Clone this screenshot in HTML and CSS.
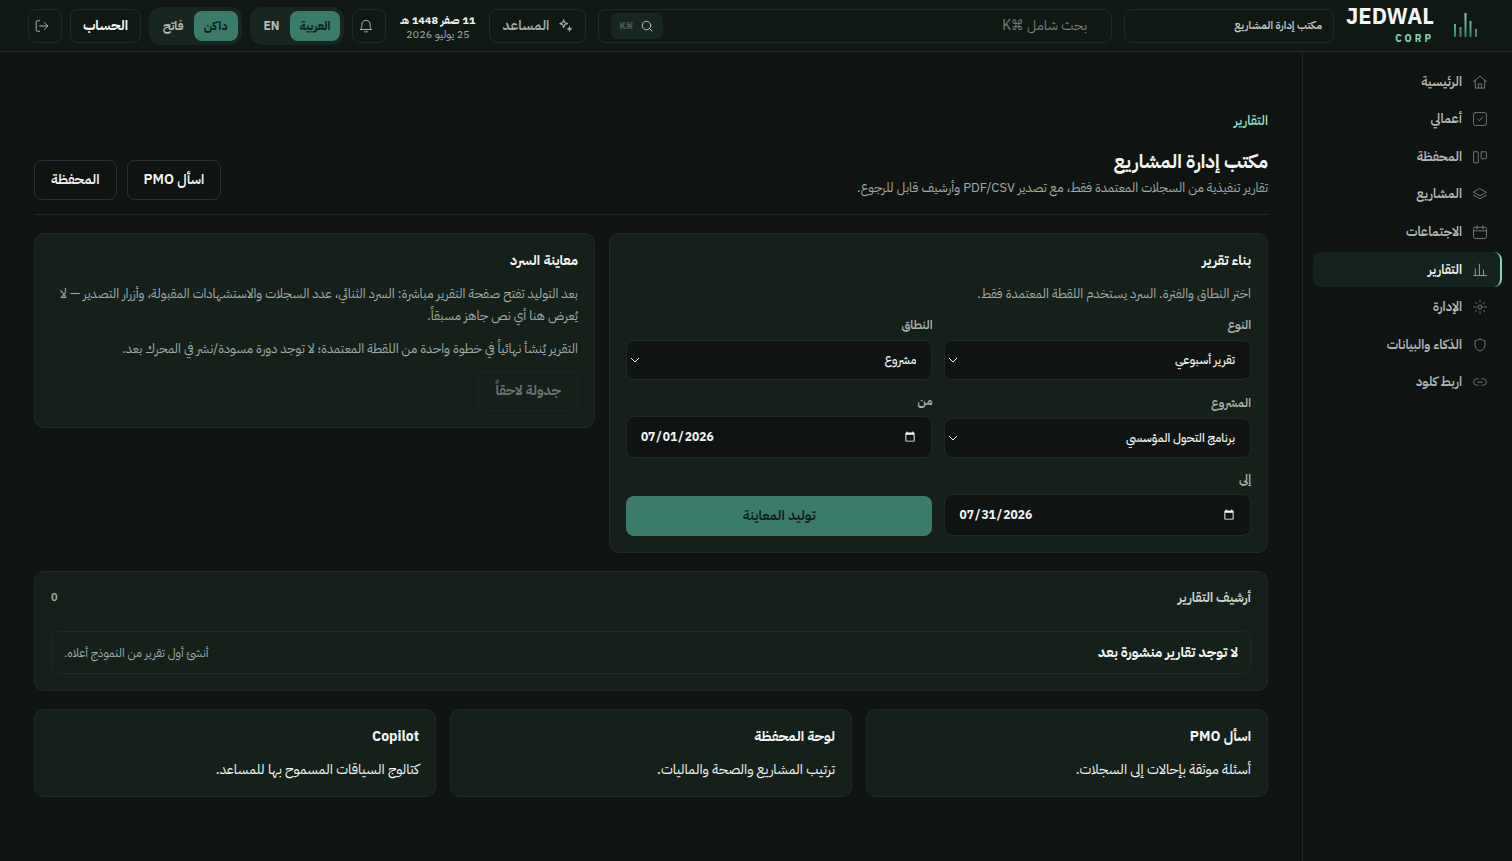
FILE: index.html
```html
<!DOCTYPE html>
<html lang="ar" dir="rtl">
<head>
<meta charset="utf-8">
<meta name="viewport" content="width=device-width, initial-scale=1">
<title>التقارير</title>
<link rel="stylesheet" href="styles.css">
</head>
<body>
<header class="topbar">
  <a class="brand" href="#">
    <svg class="brand-mark" viewBox="0 0 24 26" aria-hidden="true">
      <defs><linearGradient id="bars" gradientUnits="userSpaceOnUse" x1="0" y1="0" x2="0" y2="26"><stop offset="0" stop-color="#7fd6b6"/><stop offset="1" stop-color="#35735f"/></linearGradient></defs>
      <g fill="url(#bars)"><rect x="1" y="11" width="2" height="13"/><rect x="6.500" y="14" width="2" height="10"/><rect x="11.500" y="0" width="2" height="24"/><rect x="16.500" y="8" width="2" height="16"/><rect x="22" y="16" width="2" height="8"/></g>
    </svg>
    <span class="brand-text" dir="ltr"><strong>JEDWAL</strong><small>CORP</small></span>
  </a>
  <button class="box workspace" type="button">مكتب إدارة المشاريع</button>
  <form class="box search" role="search">
    <input class="search-input" type="search" aria-label="بحث شامل" placeholder="بحث شامل ⌘K">
    <button class="search-key" type="button" aria-label="بحث">
      <svg class="icon-s" viewBox="0 0 24 24"><circle cx="11" cy="11" r="8.500"/><path d="m22 22-5-5"/></svg>
      <kbd>⌘K</kbd>
    </button>
  </form>
  <button class="box assistant" type="button">
    <svg class="icon" viewBox="0 0 24 24"><path d="M8 1.500l1.800 4.700L14.500 8 9.800 9.800 8 14.500 6.200 9.800 1.500 8l4.700-1.800z" stroke-width="2"/><path d="M18 11.500l1.600 3.900 3.900 1.600-3.900 1.600L18 22.500l-1.600-3.900-3.900-1.600 3.900-1.600z" fill="currentColor" stroke="none"/></svg>
    <span>المساعد</span>
  </button>
  <div class="dates"><strong>11 صفر 1448 هـ</strong><span>25 يوليو 2026</span></div>
  <div class="tools">
    <button class="box square" type="button" aria-label="الإشعارات">
      <svg class="icon" viewBox="0 0 24 24"><path d="M2.500 18h19c-2-2-2.500-4.500-2.500-8.500a7 7 0 0 0-14 0c0 4-.5 6.500-2.500 8.500z"/><path d="M9.500 22h5"/></svg>
    </button>
    <div class="segment" role="group" aria-label="اللغة"><button class="on" type="button">العربية</button><button type="button">EN</button></div>
    <div class="segment" role="group" aria-label="المظهر"><button class="on" type="button">داكن</button><button type="button">فاتح</button></div>
    <button class="box account" type="button">الحساب</button>
    <button class="box square" type="button" aria-label="تسجيل الخروج">
      <svg class="icon" viewBox="0 0 24 24"><path d="M8 3H4a2 2 0 0 0-2 2v14a2 2 0 0 0 2 2h4M8 12h14M16 6l6 6-6 6"/></svg>
    </button>
  </div>
</header>
<div class="shell">
  <aside class="sidebar">
    <nav class="nav" aria-label="القائمة">
      <a href="#"><svg class="icon" viewBox="0 0 24 24"><path d="M1 11 12 2l11 9M4 9v13.500h16V9M9.500 22v-7h5v7"/></svg>الرئيسية</a>
      <a href="#"><svg class="icon" viewBox="0 0 24 24"><rect x="1" y="1" width="22" height="22" rx="3"/><path d="m8 12 3 3 5-6"/></svg>أعمالي</a>
      <a href="#"><svg class="icon" viewBox="0 0 24 24"><rect x="1" y="3" width="8" height="19" rx="1"/><rect x="14" y="3" width="9" height="12" rx="1"/></svg>المحفظة</a>
      <a href="#"><svg class="icon" viewBox="0 0 24 24"><path d="m12 3 11 6-11 6L1 9z"/><path d="m1 14 11 6 11-6"/></svg>المشاريع</a>
      <a href="#"><svg class="icon" viewBox="0 0 24 24"><rect x="1" y="4" width="22" height="19" rx="2"/><path d="M1 10h22M7 1v6M17 1v6"/></svg>الاجتماعات</a>
      <a class="active" href="#" aria-current="page"><svg class="icon" viewBox="0 0 24 24"><path d="M1 21.500h22M4 21V10M11 21V2M18 21v-9"/></svg>التقارير</a>
      <a href="#"><svg class="icon" viewBox="0 0 24 24"><circle cx="12" cy="12" r="3.500"/><path d="M12 1v3M12 20v3M1 12h4M19 12h4M4.200 4.200 6.500 6.500M17.500 17.500l2.300 2.300M4.200 19.800l2.300-2.300M17.500 6.500l2.300-2.300"/></svg>الإدارة</a>
      <a href="#"><svg class="icon" viewBox="0 0 24 24"><path d="M12 1.500c3 2 5.500 2.800 8.500 3V12c0 5-3.500 8.500-8.500 10.500C7 20.500 3.500 17 3.500 12V4.500c3-.2 5.500-1 8.500-3z"/></svg>الذكاء والبيانات</a>
      <a href="#"><svg class="icon" viewBox="0 0 24 24"><path d="M9 17.500H6.500a5.500 5.500 0 0 1 0-11H9M15 6.500h2.500a5.500 5.500 0 0 1 0 11H15M8 12h8"/></svg>اربط كلود</a>
    </nav>
  </aside>
  <main class="main">
    <p class="eyebrow">التقارير</p>
    <div class="page-head">
      <div class="page-title">
        <h1>مكتب إدارة المشاريع</h1>
        <p>تقارير تنفيذية من السجلات المعتمدة فقط، مع تصدير PDF/CSV وأرشيف قابل للرجوع.</p>
      </div>
      <div class="actions"><a class="btn" href="#">اسأل PMO</a><a class="btn" href="#">المحفظة</a></div>
    </div>
    <div class="split">
      <section class="card">
        <h2>بناء تقرير</h2>
        <p class="note">اختر النطاق والفترة. السرد يستخدم اللقطة المعتمدة فقط.</p>
        <form class="fields">
          <div class="field"><label for="kind">النوع</label><div class="pick"><select id="kind"><option>تقرير أسبوعي</option></select><svg viewBox="0 0 10 6"><path d="m1 1 4 4 4-4"/></svg></div></div>
          <div class="field"><label for="scope">النطاق</label><div class="pick"><select id="scope"><option>مشروع</option></select><svg viewBox="0 0 10 6"><path d="m1 1 4 4 4-4"/></svg></div></div>
          <div class="field"><label for="project">المشروع</label><div class="pick"><select id="project"><option>برنامج التحول المؤسسي</option></select><svg viewBox="0 0 10 6"><path d="m1 1 4 4 4-4"/></svg></div></div>
          <div class="field"><label for="from">من</label><input id="from" type="date" dir="ltr" value="2026-07-01"></div>
          <div class="field"><label for="to">إلى</label><input id="to" type="date" dir="ltr" value="2026-07-31"></div>
          <button class="primary" type="button">توليد المعاينة</button>
        </form>
      </section>
      <section class="card">
        <h2>معاينة السرد</h2>
        <p class="note">بعد التوليد تفتح صفحة التقرير مباشرة: السرد الثنائي، عدد السجلات والاستشهادات المقبولة، وأزرار التصدير — لا يُعرض هنا أي نص جاهز مسبقاً.</p>
        <p class="note">التقرير يُنشأ نهائياً في خطوة واحدة من اللقطة المعتمدة؛ لا توجد دورة مسودة/نشر في المحرك بعد.</p>
        <button class="btn" type="button" disabled>جدولة لاحقاً</button>
      </section>
    </div>
    <section class="card archive">
      <div class="archive-head"><h3>أرشيف التقارير</h3><span>0</span></div>
      <div class="empty"><strong>لا توجد تقارير منشورة بعد</strong><span>أنشئ أول تقرير من النموذج أعلاه.</span></div>
    </section>
    <div class="links">
      <a class="card" href="#"><h2>اسأل PMO</h2><p>أسئلة موثقة بإحالات إلى السجلات.</p></a>
      <a class="card" href="#"><h2>لوحة المحفظة</h2><p>ترتيب المشاريع والصحة والماليات.</p></a>
      <a class="card" href="#"><h2>Copilot</h2><p>كتالوج السياقات المسموح بها للمساعد.</p></a>
    </div>
  </main>
</div>
</body>
</html>
```

FILE: styles.css
```css
:root {
  color-scheme: dark;
  --bg: #0f1413;
  --bar: #101814;
  --card: #15201b;
  --line: #1f2a26;
  --text: #f1f5f3;
  --muted: #a4aca8;
  --accent: #3a7b69;
  --mint: #7fd6b6;
  --font: "IBM Plex Sans Arabic", "Open Sans", "DejaVu Sans Condensed", "DejaVu Sans", sans-serif;
}
* { box-sizing: border-box; }
body { margin: 0; min-height: 100vh; display: flex; flex-direction: column; background: var(--bg); color: var(--text); font: 14px/20px var(--font); }
a { color: inherit; text-decoration: none; }
button, input, select { font: inherit; color: inherit; }
button { cursor: pointer; white-space: nowrap; }
h1, h2, h3, p { margin: 0; }
.icon, .icon-s { width: 14px; height: 14px; flex: none; fill: none; stroke: currentColor; stroke-width: 1.5; stroke-linecap: round; stroke-linejoin: round; }
.icon-s { width: 12px; height: 12px; stroke-width: 2; }

.topbar { height: 52px; display: flex; align-items: center; gap: 12px; padding: 0 35px 0 28px; background: var(--bar); border-bottom: 1px solid #20302a; white-space: nowrap; }
.brand { display: flex; align-items: center; gap: 19px; }
.brand-mark { width: 24px; height: 26px; }
.brand-text { display: flex; flex-direction: column; align-items: flex-end; }
.brand-text strong { font: 700 22px/26px var(--font); }
.brand-text small { font-size: 10px; line-height: 18px; font-weight: 700; letter-spacing: 3px; color: var(--mint); }
.box { height: 34px; border: 1px solid var(--line); border-radius: 8px; background: transparent; }
.workspace { width: 210px; padding: 0 11px; text-align: start; font-size: 11px; font-weight: 600; color: #c4cac7; }
.search { flex: 1; min-width: 160px; display: flex; align-items: center; padding: 0 24px 0 12px; }
.search-input { flex: 1; min-width: 0; padding: 0; border: 0; outline: 0; background: transparent; }
.search-input::placeholder { color: #757d79; opacity: 1; }
.search-key { display: flex; align-items: center; gap: 8px; height: 26px; padding: 0 10px 0 8px; border: 0; border-radius: 6px; background: #182622; color: #b9c0bc; }
.search-key kbd { font: 600 9px/12px var(--font); color: #59625e; }
.assistant { display: flex; align-items: center; gap: 10px; padding: 0 12px; font-weight: 600; color: var(--muted); }
.dates { display: flex; flex-direction: column; align-items: center; min-width: 79px; padding-top: 4px; }
.dates strong, .dates span { font-size: 11px; line-height: 14px; }
.dates span { color: var(--muted); }
.tools { display: flex; align-items: center; gap: 8px; }
.square { width: 34px; display: grid; place-items: center end; padding: 0 6px; color: #c0c6c3; }
.account { width: 71px; padding: 0; font-weight: 700; }
.segment { display: flex; padding: 4px; border-radius: 12px; background: #182622; }
.segment button { height: 30px; padding: 0 10px; border: 0; border-radius: 8px; background: transparent; font-size: 12px; font-weight: 700; color: #b3bab6; }
.segment .on { background: var(--accent); color: #101a16; }

.shell { flex: 1; display: grid; grid-template-columns: 210px minmax(0, 1fr); }
.sidebar { border-left: 1px solid #202725; padding: 12px 10px; }
.nav { display: grid; gap: 2px; min-height: 336px; }
.nav a { display: flex; align-items: center; gap: 11px; padding: 0 15px; border-radius: 8px; font-size: 13px; font-weight: 600; color: #b3bab6; }
.nav .icon { color: #7b8480; }
.nav .active { padding-right: 13px; border-right: 2px solid var(--mint); background: #15231e; color: var(--text); }
.nav .active .icon { color: #6fc3a4; }

.main { padding: 58px 34px 34px; }
.eyebrow { color: #8adcbc; font-size: 13px; line-height: 22px; font-weight: 600; }
.page-head { display: flex; align-items: flex-end; justify-content: space-between; gap: 24px; padding: 16px 0 14px; border-bottom: 1px solid #202725; }
.page-title { display: grid; gap: 2px; }
.page-title h1 { font-size: 19px; line-height: 28px; }
.page-title p { margin-bottom: 2px; font-size: 13px; line-height: 20px; color: var(--muted); }
.actions { display: flex; gap: 10px; }
.btn { display: inline-flex; align-items: center; justify-content: center; height: 40px; padding: 0 16px; border: 1px solid #2a3230; border-radius: 8px; background: transparent; font-weight: 600; white-space: nowrap; }
.btn:disabled { opacity: .4; }
.card { display: block; padding: 16px; border: 1px solid var(--line); border-radius: 10px; background: var(--card); }
.card h2 { font-size: 14px; line-height: 22px; }
.split { display: grid; grid-template-columns: 47fr 40fr; align-items: start; gap: 14px; margin-top: 18px; }
.note { margin-top: 11px; font-size: 13px; line-height: 22px; color: var(--muted); }
.note + .btn { margin-top: 11px; }
.fields { display: grid; grid-template-columns: 1fr 1fr; align-items: end; gap: 12px; margin-top: 11px; }
.field { display: grid; gap: 6px; }
.field label { font-size: 12px; line-height: 18px; font-weight: 600; color: #adb4b0; }
.field select, .field input { width: 100%; border: 1px solid var(--line); border-radius: 8px; background: #0f1413; }
.pick { display: grid; align-items: center; }
.pick > * { grid-area: 1 / 1; }
.pick svg { justify-self: end; width: 10px; height: 6px; margin-left: 4px; fill: none; stroke: currentColor; pointer-events: none; }
.field select { height: 40px; padding: 0 15px; appearance: none; font-size: 12px; font-weight: 500; }
.field input { height: 42px; padding: 0 13px; font-size: 12px; font-weight: 700; }
.primary { height: 40px; border: 0; border-radius: 8px; background: var(--accent); color: #0f1b16; font-weight: 600; }

.archive { margin-top: 18px; }
.archive-head { display: flex; align-items: center; justify-content: space-between; }
.archive-head h3 { font-size: 13px; line-height: 20px; color: #c9cfcc; }
.archive-head span { font-size: 11px; line-height: 20px; font-weight: 600; color: var(--muted); }
.empty { display: flex; align-items: center; justify-content: space-between; gap: 16px; min-height: 43px; margin-top: 23px; padding: 0 12px; border: 1px solid var(--line); border-radius: 8px; }
.empty span { font-size: 12px; color: var(--muted); }
.links { display: grid; grid-template-columns: repeat(3, minmax(0, 1fr)); gap: 14px; margin-top: 18px; }
.links p { margin-top: 11px; line-height: 21px; }
```
